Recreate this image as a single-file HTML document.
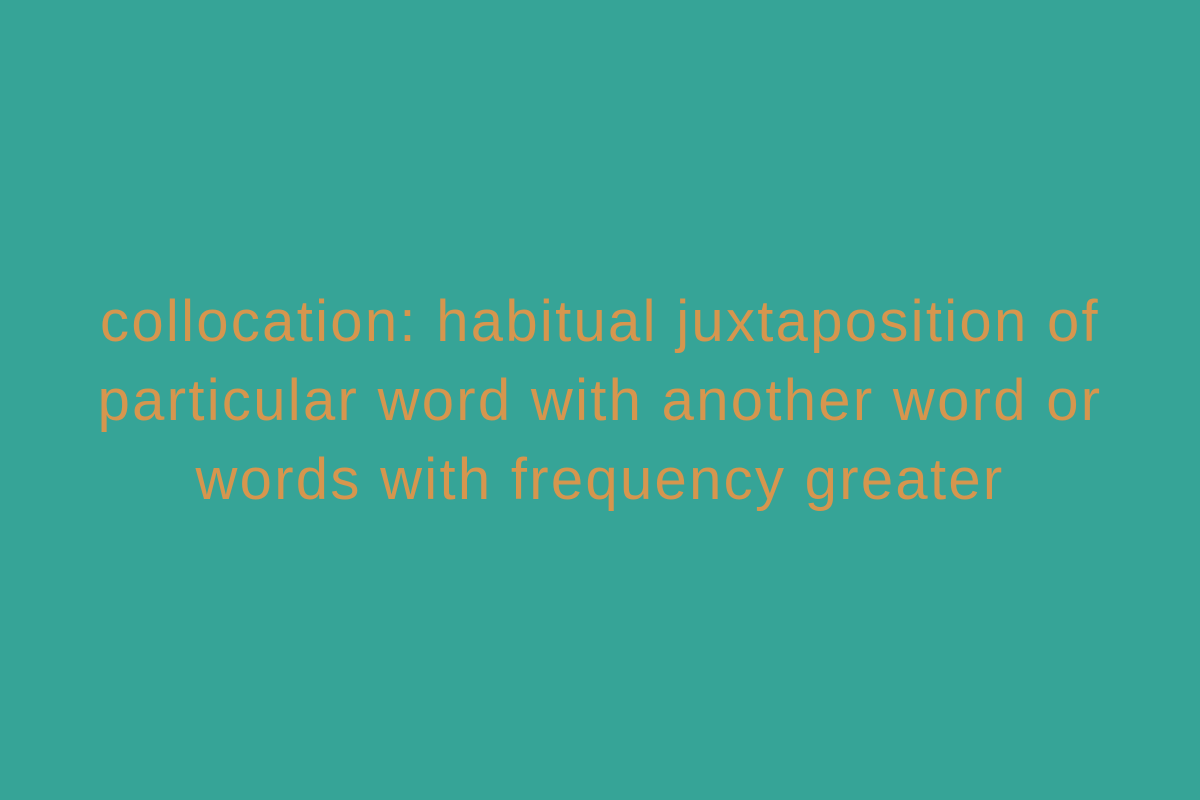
<html><head><style>
body{margin:0;width:1200px;height:800px;background:#36a497;display:flex;align-items:center;justify-content:center}
p{margin:0;font-family:"Liberation Sans",sans-serif;font-size:58px;line-height:79px;letter-spacing:2.3px;color:#d6964e;text-align:center;white-space:nowrap}
</style></head><body><p>collocation: habitual juxtaposition of<br>particular word with another word or<br>words with frequency greater</p></body></html>
